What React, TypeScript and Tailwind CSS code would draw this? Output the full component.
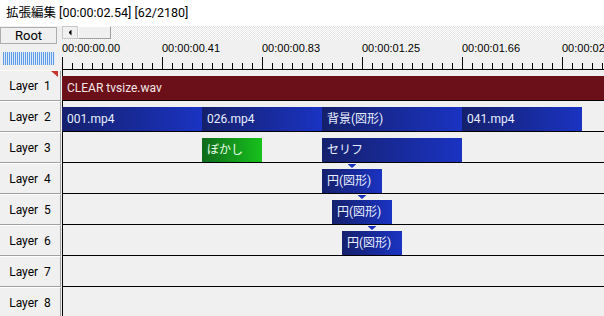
import React from 'react';

type Clip = {
  x: number;
  w: number;
  label: string;
  kind: 'audio' | 'blue' | 'green';
  marker?: boolean;
};

// 各レイヤーのオブジェクト (x は画面上の左端 px)
const layers: Clip[][] = [
  [{ x: 62, w: 542, label: 'CLEAR tvsize.wav', kind: 'audio' }],
  [
    { x: 62, w: 140, label: '001.mp4', kind: 'blue' },
    { x: 202, w: 120, label: '026.mp4', kind: 'blue' },
    { x: 322, w: 140, label: '背景(図形)', kind: 'blue' },
    { x: 462, w: 120, label: '041.mp4', kind: 'blue' },
  ],
  [
    { x: 202, w: 60, label: 'ぼかし', kind: 'green' },
    { x: 322, w: 140, label: 'セリフ', kind: 'blue' },
  ],
  [{ x: 322, w: 60, label: '円(図形)', kind: 'blue', marker: true }],
  [{ x: 332, w: 60, label: '円(図形)', kind: 'blue', marker: true }],
  [{ x: 342, w: 60, label: '円(図形)', kind: 'blue', marker: true }],
  [],
  [],
];

const times = ['00:00:00.00', '00:00:00.41', '00:00:00.83', '00:00:01.25', '00:00:01.66', '00:00:02.08'];

const kindClass = {
  audio: 'bg-[#6b1019] text-[#f3e6e6]',
  blue: 'bg-[linear-gradient(90deg,#15206c,#1a33c2)] text-[#e8eeff]',
  green: 'bg-[linear-gradient(90deg,#0f6a1c,#17c21c)] text-[#e8ffe8]',
};

function Ruler() {
  const ticks = [];
  for (let i = 0; i <= 54; i++) {
    const x = i * 10 + 0.5;
    const major = i % 10 === 0;
    ticks.push(<line key={i} x1={x} x2={x} y1={major ? 13 : 19} y2={25} stroke="#000" strokeWidth={1} />);
  }
  return (
    <div className="relative h-[30px] bg-[#f0f0f0]">
      {times.map((t, i) => (
        <span
          key={t}
          className="absolute top-[2px] text-[11px] leading-[13px] text-black whitespace-nowrap font-['Liberation_Sans',sans-serif]"
          style={{ left: i * 100 }}
        >
          {t}
        </span>
      ))}
      <svg className="absolute left-0 top-[4px]" width={542} height={26}>
        {ticks}
        <line x1={0} x2={542} y1={25.5} y2={25.5} stroke="#000" strokeWidth={1} />
      </svg>
    </div>
  );
}

function LayerRow({ index, clips }: { index: number; clips: Clip[] }) {
  return (
    <div className="flex h-[31px]">
      <div className="w-[62px] shrink-0 pr-[1px]">
        <div className="relative flex h-full items-center justify-center border-t border-t-white border-b border-b-[#a0a0a0] border-r border-r-[#a0a0a0] bg-[#f0f0f0] text-[12px] text-black whitespace-pre">
          {`Layer  ${index + 1}`}
          {index === 0 && (
            <div className="absolute right-[2px] top-0 h-[6px] w-[7px] bg-[#c8352c] [clip-path:polygon(0_0,100%_0,100%_100%)]" />
          )}
        </div>
      </div>
      <div className="relative flex-1 border-l border-b border-black">
        {clips.map((c) => (
          <div
            key={c.label + c.x}
            className={`absolute top-[6px] h-[24px] flex items-center pl-[5px] text-[12px] whitespace-nowrap ${kindClass[c.kind]}`}
            style={{ left: c.x - 63, width: c.w }}
          >
            {c.marker && (
              <div className="absolute left-1/2 top-[-5px] h-[4px] w-[9px] -translate-x-1/2 bg-[#1a30c0] [clip-path:polygon(0_0,100%_0,50%_100%)]" />
            )}
            {c.label}
          </div>
        ))}
      </div>
    </div>
  );
}

export default function App() {
  return (
    <div className="h-[316px] w-[604px] overflow-hidden bg-[#f0f0f0] font-['Roboto','Noto_Sans_CJK_JP',sans-serif]">
      {/* タイトル */}
      <div className="flex h-[26px] items-center bg-white pl-[6px] text-[12.5px] text-black">
        拡張編集 [00:00:02.54] [62/2180]
      </div>

      {/* ヘッダー */}
      <div className="flex h-[44px]">
        <div className="w-[62px] shrink-0">
          <div className="mt-[1px] flex h-[17px] w-[57px] items-center justify-center border border-[#adadad] bg-[#f0f0f0] text-[13px] text-black">
            Root
          </div>
          <div className="ml-[3px] mt-[8px] h-[13px] w-[52px] bg-[repeating-linear-gradient(90deg,#5c9be6_0_1px,#dfeaf8_1px_2px)]" />
        </div>
        <div className="flex flex-1 flex-col">
          <div className="flex h-[14px] bg-[repeating-conic-gradient(#e6e6e6_0_25%,#ffffff_0_50%)] bg-[length:2px_2px]">
            <div className="flex h-[13px] w-[16px] items-center justify-center border border-[#c8c8c8] bg-[#f0f0f0]">
              <div className="h-[6px] w-[3px] bg-black [clip-path:polygon(100%_0,0_50%,100%_100%)]" />
            </div>
            <div className="h-[13px] w-[33px] border-r border-b border-r-[#a0a0a0] border-b-[#a0a0a0] border-l border-t border-l-white border-t-white bg-[#f0f0f0]" />
          </div>
          <Ruler />
        </div>
      </div>

      {layers.map((clips, i) => (
        <LayerRow key={i} index={i} clips={clips} />
      ))}
    </div>
  );
}
